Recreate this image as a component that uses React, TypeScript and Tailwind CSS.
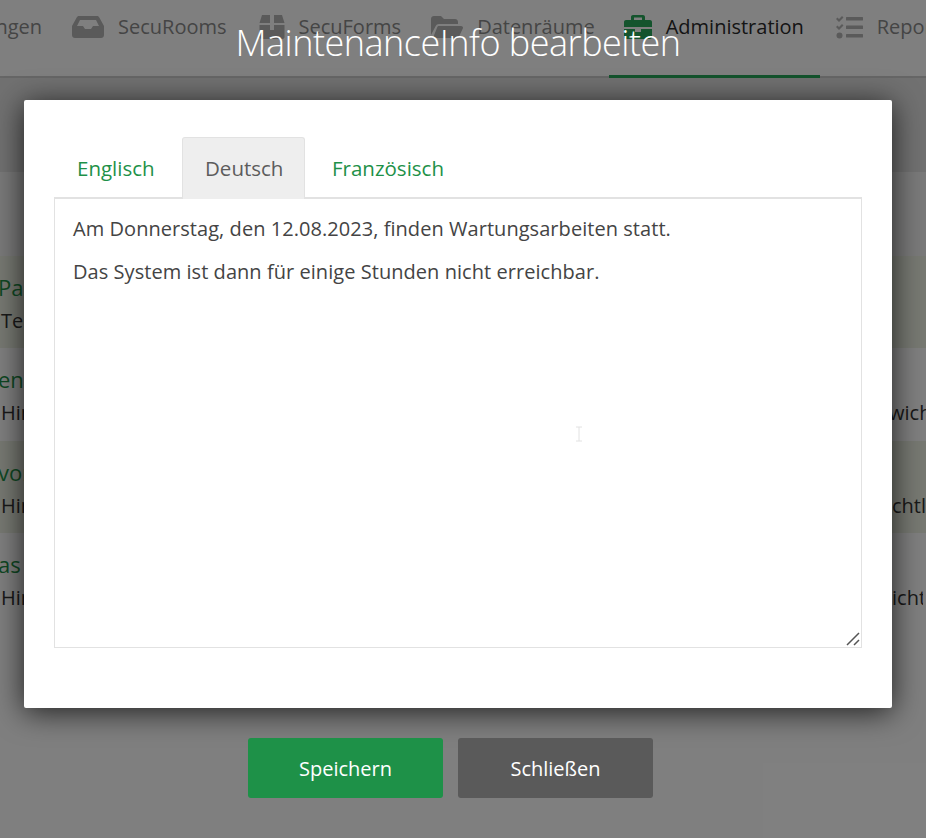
import React from "react";

const FONT = "font-['Open_Sans','Noto_Sans',sans-serif]";

function Inbox() {
  return (
    <svg width="32" height="22" viewBox="0 0 32 22" fill="currentColor">
      <path d="M7 0h18c1 0 1.800.5 2.300 1.500L32 10v9c0 1.700-1.300 3-3 3H3c-1.700 0-3-1.300-3-3v-9L4.700 1.500C5.200.5 6 0 7 0zm1 4l-3 6h6l2 3h6l2-3h6l-3-6H8z" />
    </svg>
  );
}

function Box() {
  return (
    <svg width="26" height="24" viewBox="0 0 26 24" fill="currentColor">
      <path d="M3 0h8v8H0.500L3 0zM15 0h8l2.500 8H15V0zM0.500 10H11v5h4v-5h10.500v12c0 1-1 2-2 2H2.500c-1 0-2-1-2-2V10z" />
    </svg>
  );
}

function Folder() {
  return (
    <svg width="32" height="22" viewBox="0 0 32 22" fill="currentColor">
      <path d="M0 3c0-1.700 1.300-3 3-3h7l3 3h11c1.700 0 3 1.300 3 3v2H8c-1.500 0-2.700.8-3.300 2L0 19V3zM8 10h22c1.500 0 2.400 1.200 1.800 2.500l-3.500 7.500c-.5 1.200-1.500 2-2.700 2H2l4.200-10.800C6.500 10.500 7.200 10 8 10z" />
    </svg>
  );
}

function Briefcase() {
  return (
    <svg width="28" height="24" viewBox="0 0 28 24" fill="currentColor">
      <path d="M9 0h10c1.100 0 2 .9 2 2v3h5c1.100 0 2 .9 2 2v5H0V7c0-1.100.9-2 2-2h5V2c0-1.100.9-2 2-2zm1 2.500V5h8V2.500h-8zM0 14h11v3h6v-3h11v8c0 1.100-.9 2-2 2H2c-1.100 0-2-.9-2-2v-8z" />
    </svg>
  );
}

function Tasks() {
  return (
    <svg width="28" height="23" viewBox="0 0 28 23" fill="currentColor">
      <path d="M1 3l1.500-1.500L4 3l3-3 1.500 1.500L4 6 1 3zM1 11l1.500-1.500L4 11l3-3 1.500 1.500L4 14l-3-3z" />
      <rect x="11" y="1" width="17" height="3.500" rx="0.500" />
      <rect x="11" y="9.500" width="17" height="3.500" rx="0.500" />
      <rect x="11" y="18" width="17" height="3.500" rx="0.500" />
      <circle cx="4.500" cy="19.500" r="3" />
    </svg>
  );
}

function NavItem({ icon, label, active = false, className = "" }: { icon: React.ReactNode; label: string; active?: boolean; className?: string }) {
  return (
    <div className={`flex h-[78px] shrink-0 items-center gap-[14px] text-[20px] ${active ? "w-[211px] border-b-[3px] border-[#28a85a] pb-[21px] pl-[15px] text-[#2a2a2a]" : "pb-[24px] text-[#8a8a8a]"} ${className}`}>
      <span className={active ? "text-[#28a85a]" : "text-[#b4b4b4]"}>{icon}</span>
      <span className="whitespace-nowrap">{label}</span>
    </div>
  );
}

function Row({ title, text, right, rightClass = "", tint }: { title: string; text: string; right?: string; rightClass?: string; tint?: boolean }) {
  return (
    <div className={`flex h-[92.4px] justify-between overflow-hidden pt-[15px] ${tint ? "bg-[#eef3e4]" : "bg-white"}`}>
      <div className="w-[40px] overflow-hidden whitespace-nowrap">
        <div className="-ml-[2px] text-[22px] leading-[33px] text-[#1e9148]">{title}</div>
        <div className="pl-[1px] text-[20px] leading-[33px] text-[#333]">{text}</div>
      </div>
      {right && (
        <div className={`mt-[33px] overflow-hidden text-[20px] leading-[33px] whitespace-nowrap text-[#333] ${rightClass}`}>{right}</div>
      )}
    </div>
  );
}

export default function App() {
  return (
    <div className={`relative h-[838px] w-[926px] overflow-hidden bg-white ${FONT}`}>
      {/* page beneath */}
      <div className="flex h-[78px] items-start gap-[30px] border-b-2 border-[#ccc] bg-white">
        <div className="flex h-[76px] w-[42px] shrink-0 items-center justify-end overflow-hidden pb-[22px] text-[20px] whitespace-nowrap text-[#8a8a8a]">ngen</div>
        <NavItem icon={<Inbox />} label="SecuRooms" />
        <NavItem icon={<Box />} label="SecuForms" className="ml-[2px]" />
        <NavItem icon={<Folder />} label="Datenräume" />
        <NavItem icon={<Briefcase />} label="Administration" active className="-ml-[16px]" />
        <NavItem icon={<Tasks />} label="Reports" className="-ml-[15px]" />
      </div>
      <div className="h-[94px] bg-[#e2e2e2]" />
      <div className="h-[84px] bg-[#f5f5f5]" />
      <Row title="Pac" text="Te" tint />
      <Row title="en" text="Hin" right="wichtig" rightClass="w-[37px]" />
      <Row title="vor" text="Hin" right="chtlich" rightClass="w-[34px]" tint />
      <Row title="as" text="Hin" right="icht" rightClass="mr-[3px] w-[31px]" />

      {/* dimming backdrop */}
      <div className="absolute inset-0 bg-black/50" />

      {/* dialog */}
      <div className="absolute inset-0 flex flex-col items-center pr-[10px]">
        <h1 className="mt-[18px] h-[50px] text-[36px] leading-[50px] font-light tracking-[-0.5px] text-white">MaintenanceInfo bearbeiten</h1>
        <div className="mt-[32px] h-[608px] w-[868px] rounded-[2px] bg-white px-[30px] pt-[37px] shadow-[0_4px_30px_rgba(0,0,0,0.75)]">
          <div className="flex h-[62px] border-b-2 border-[#e2e2e2] text-[20.5px] text-[#1e9148]">
            <div className="flex h-[62px] w-[128px] items-center pl-[23px]">Englisch</div>
            <div className="flex h-[62px] w-[123px] items-center rounded-t-[3px] border border-b-0 border-[#e2e2e2] bg-[#eeeeee] pl-[22px] text-[#5c5c5c]">Deutsch</div>
            <div className="flex h-[62px] items-center pl-[27px]">Französisch</div>
          </div>
          <div className="relative h-[449px] border border-t-0 border-[#e2e2e2] px-[18px] pt-[14px] text-[20px] leading-[32px] tracking-[0.05px] text-[#444]">
            <p className="mb-[11px]">Am Donnerstag, den 12.08.2023, finden Wartungsarbeiten statt.</p>
            <p>Das System ist dann für einige Stunden nicht erreichbar.</p>
            <svg className="absolute top-[227px] left-[520px]" width="8" height="16" viewBox="0 0 8 16" stroke="#e2e2e2" strokeWidth="1" fill="none">
              <path d="M1 1h6M4 1v14M1 15h6" />
            </svg>
            <svg className="absolute right-[1px] bottom-[1px]" width="14" height="14" viewBox="0 0 14 14" stroke="#555" strokeWidth="1.500" fill="none">
              <path d="M1 13L13 1M8 13l5-5" />
            </svg>
          </div>
        </div>
        <div className="mt-[30px] mr-[15px] flex gap-[15px]">
          <button className="h-[60px] w-[195px] rounded-[3px] bg-[#1e9148] pt-[1px] text-[20px] text-white">Speichern</button>
          <button className="h-[60px] w-[195px] rounded-[3px] bg-[#5a5a5a] pt-[1px] text-[20px] text-white">Schließen</button>
        </div>
      </div>
    </div>
  );
}
